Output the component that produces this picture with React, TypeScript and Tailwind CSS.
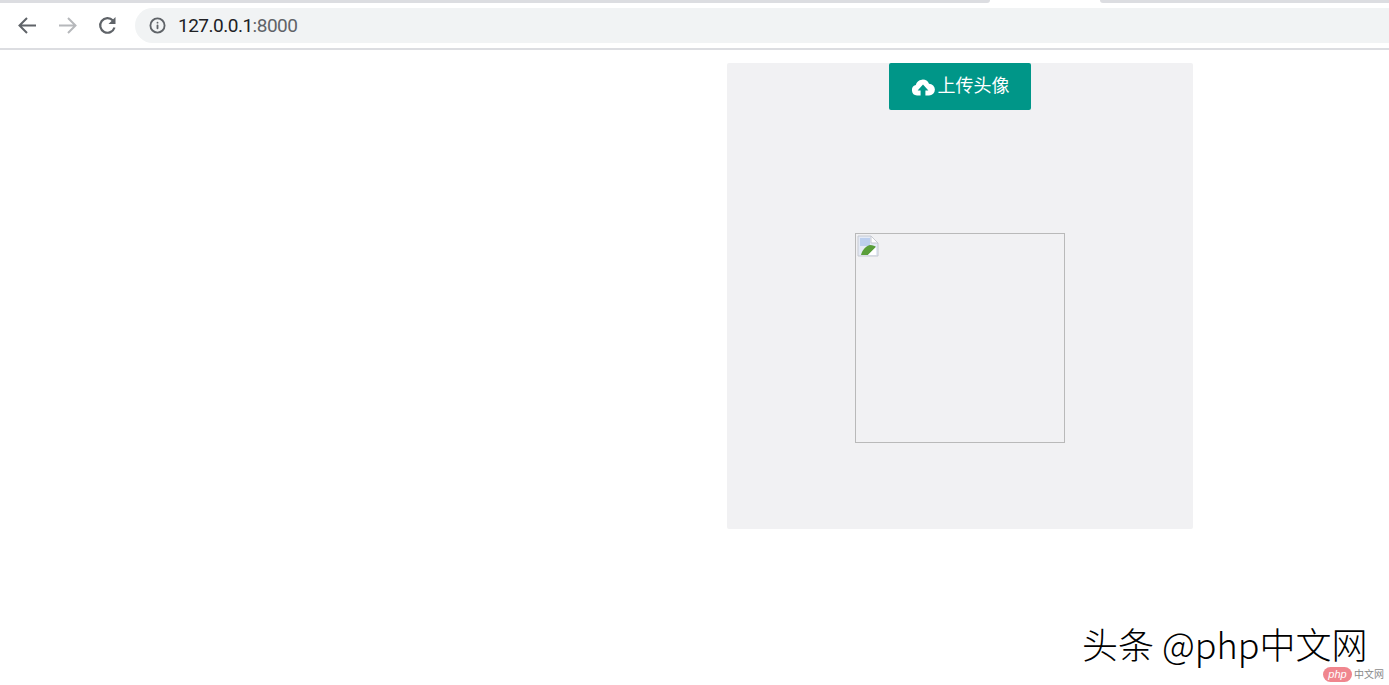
import { Info } from "lucide-react";

const cjk = "font-['Liberation_Sans','Noto_Sans_CJK_SC',sans-serif]";

function BrokenImage() {
  return (
    <svg width="22" height="22" viewBox="0 0 22 22" className="ml-[1px] mt-[1px]">
      <path d="M1 1h13l7 7v13H1z" fill="#e4eaf6" stroke="#c6c9d0" strokeWidth="1" />
      <path d="M14 1v7h7z" fill="#ffffff" stroke="#c6c9d0" strokeWidth="1" />
      <path d="M3 3h10v8H3z" fill="#bccfee" />
      <path d="M4 20c1-5 5-9 9-10 3 0 5 1 6 2l-8 8z" fill="#5a9e3a" />
      <path d="M11 20l8-8v8z" fill="#ffffff" />
    </svg>
  );
}

function CloudUpload() {
  return (
    <svg width="24" height="18" viewBox="0 0 24 18" className="shrink-0">
      <path
        fill="#ffffff"
        d="M6 17.5a5.3 5.3 0 0 1-1.2-10.4A7 7 0 0 1 18 5.7a5.9 5.9 0 0 1 0 11.8h-3.6v-5h3L12 6.4 6.600 12.500h3v5z"
      />
    </svg>
  );
}

function BrowserBar() {
  return (
    <div className="h-[50px] bg-white border-b-2 border-[#dcdde1]">
      <div className="flex h-[3px]">
        <div className="w-[990px] rounded-br-[5px] bg-[#dcdde1]" />
        <div className="w-[110px]" />
        <div className="flex-1 rounded-bl-[5px] bg-[#dcdde1]" />
      </div>
      <div className="flex items-center mt-[5px] h-[35px]">
        <div className="flex items-center w-[135px] shrink-0 pl-[17px] gap-[19px]">
          <svg width="21" height="21" viewBox="0 0 21 21" fill="none" stroke="#5f6368" strokeWidth="2">
            <path d="M19 10.500H3M10 3l-7.500 7.500L10 18" />
          </svg>
          <svg width="21" height="21" viewBox="0 0 21 21" fill="none" stroke="#b6b8bb" strokeWidth="2">
            <path d="M2 10.500h16M11 3l7.500 7.500L11 18" />
          </svg>
          <svg width="21" height="21" viewBox="0 0 21 21" fill="none" stroke="#5f6368" strokeWidth="2.2">
            <path d="M17.500 12.500a7.300 7.300 0 1 1-1.600-7" />
            <path d="M18.500 2v7h-7" fill="#5f6368" stroke="none" />
          </svg>
        </div>
        <div className="flex-1 h-full bg-[#f1f3f4] rounded-l-full flex items-center pl-[14px] gap-[12px]">
          <Info size={17} color="#5f6368" strokeWidth={2.6} />
          <span className="font-['Roboto',sans-serif] text-[19px] leading-none tracking-[-0.5px] text-[#202124]">
            127.0.0.1<span className="text-[#5f6368]">:8000</span>
          </span>
        </div>
      </div>
    </div>
  );
}

export default function App() {
  return (
    <div className={`relative h-[685px] w-[1389px] overflow-hidden bg-white ${cjk}`}>
      <BrowserBar />

      <div className="ml-[727px] mt-[13px] flex h-[466px] w-[466px] flex-col items-center rounded-[2px] bg-[#f1f1f3]">
        <button className="flex h-[47px] w-[142px] items-center justify-center gap-[3px] rounded-[2px] bg-[#009688] text-[18px] text-white">
          <CloudUpload />
          上传头像
        </button>
        <div className="mt-[123px] h-[210px] w-[210px] border border-[#b9b9b9]">
          <BrokenImage />
        </div>
      </div>

      {/* watermark */}
      <div className="absolute left-[1082px] top-[620px] whitespace-nowrap font-['Noto_Sans_CJK_SC',sans-serif] text-[36px] font-light leading-[46px] text-black">
        头条 @php中文网
      </div>
      <div className="absolute left-[1323px] top-[667px] flex items-center gap-[2px]">
        <span className="flex h-[15px] w-[29px] items-center justify-center rounded-full bg-[#f0868e] text-[11px] italic leading-none text-white">
          php
        </span>
        <span className="text-[10px] leading-none text-[#8a8a8a]">中文网</span>
      </div>
    </div>
  );
}
